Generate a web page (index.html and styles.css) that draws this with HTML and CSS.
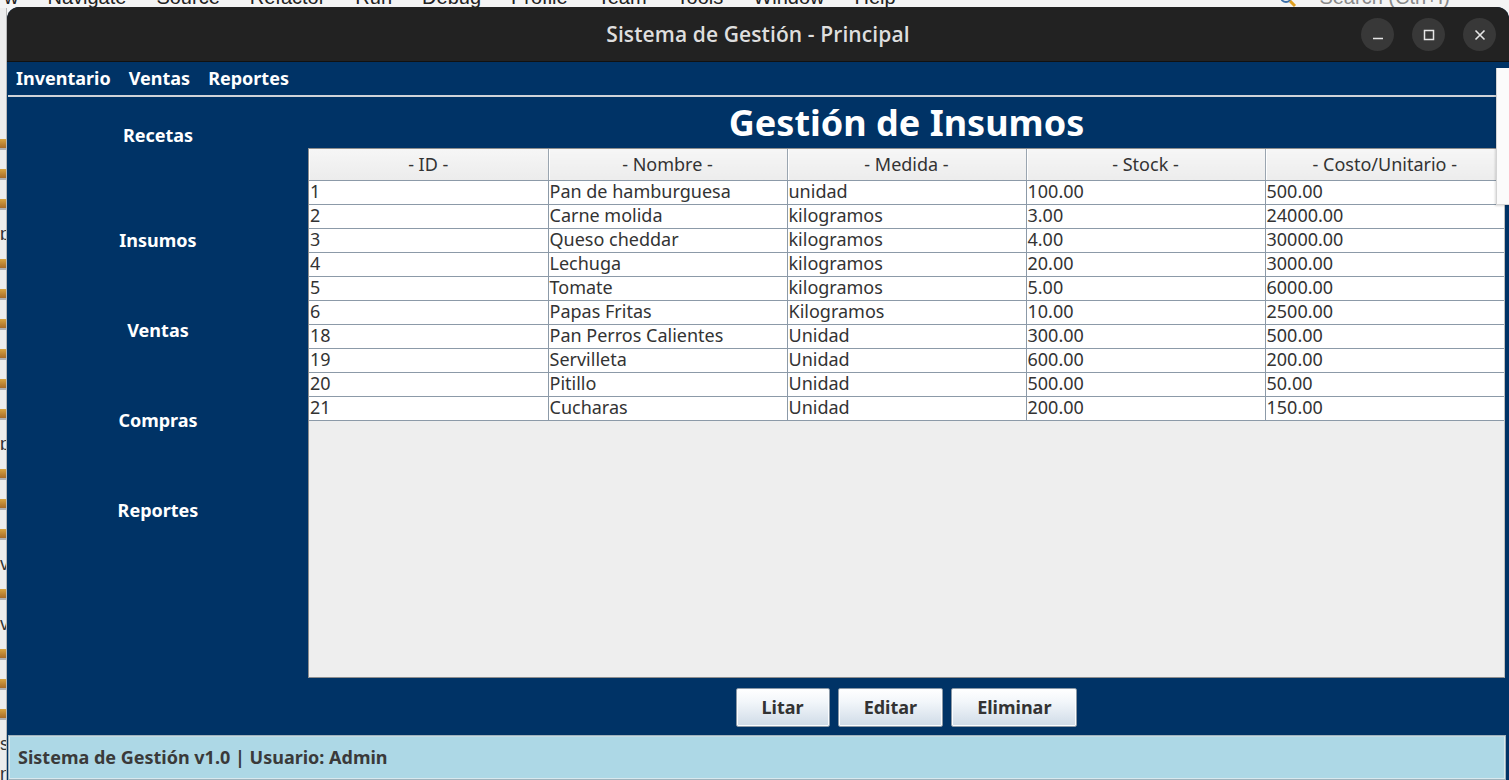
FILE: index.html
```html
<!DOCTYPE html>
<html lang="es">
<head>
<meta charset="utf-8">
<title>Sistema de Gestión - Principal</title>
<link rel="stylesheet" href="styles.css">
</head>
<body>
<div class="ide">
  <div class="ide-menu">
    <span class="m1">w</span><span>Navigate</span><span>Source</span><span>Refactor</span><span>Run</span><span>Debug</span><span>Profile</span><span>Team</span><span>Tools</span><span>Window</span><span>Help</span>
    <span class="ide-search"><svg width="18" height="18" viewBox="0 0 18 18"><circle cx="7" cy="7" r="5" fill="none" stroke="#3b6ea8" stroke-width="2"/><path d="M11 11l5 5" stroke="#e0a020" stroke-width="3"/></svg>Search (Ctrl+I)</span>
  </div>
  <div class="ide-left">
    <i></i><i></i><i></i><b>p</b><i></i><i></i><i></i><i></i><i></i><i></i><b>p</b><i></i><i></i><i></i><b>v</b><i></i><b>v</b><i></i><i></i><i></i><b>s</b><b>n</b>
  </div>
</div>

<div class="window">
  <div class="titlebar">
    <span class="title">Sistema de Gestión - Principal</span>
    <div class="controls">
      <span class="ctl"><svg width="14" height="14" viewBox="0 0 14 14"><path d="M2 10.5h10" stroke="#e6e6e6" stroke-width="1.6"/></svg></span>
      <span class="ctl"><svg width="14" height="14" viewBox="0 0 14 14"><rect x="2.5" y="2.5" width="9" height="9" fill="none" stroke="#e6e6e6" stroke-width="1.5"/></svg></span>
      <span class="ctl"><svg width="14" height="14" viewBox="0 0 14 14"><path d="M2.5 2.5l9 9M11.5 2.5l-9 9" stroke="#e6e6e6" stroke-width="1.6"/></svg></span>
    </div>
  </div>

  <nav class="menubar">
    <span>Inventario</span><span>Ventas</span><span>Reportes</span>
  </nav>

  <div class="main">
    <aside class="sidebar">
      <span class="nav-item first">Recetas</span>
      <span class="nav-item">Insumos</span>
      <span class="nav-item">Ventas</span>
      <span class="nav-item">Compras</span>
      <span class="nav-item">Reportes</span>
    </aside>
    <section class="content">
      <h1 class="page-title">Gestión de Insumos</h1>
      <div class="table-wrap">
        <table class="grid">
          <thead>
            <tr><th>- ID -</th><th>- Nombre -</th><th>- Medida -</th><th>- Stock -</th><th>- Costo/Unitario -</th></tr>
          </thead>
          <tbody>
            <tr><td>1</td><td>Pan de hamburguesa</td><td>unidad</td><td>100.00</td><td>500.00</td></tr>
            <tr><td>2</td><td>Carne molida</td><td>kilogramos</td><td>3.00</td><td>24000.00</td></tr>
            <tr><td>3</td><td>Queso cheddar</td><td>kilogramos</td><td>4.00</td><td>30000.00</td></tr>
            <tr><td>4</td><td>Lechuga</td><td>kilogramos</td><td>20.00</td><td>3000.00</td></tr>
            <tr><td>5</td><td>Tomate</td><td>kilogramos</td><td>5.00</td><td>6000.00</td></tr>
            <tr><td>6</td><td>Papas Fritas</td><td>Kilogramos</td><td>10.00</td><td>2500.00</td></tr>
            <tr><td>18</td><td>Pan Perros Calientes</td><td>Unidad</td><td>300.00</td><td>500.00</td></tr>
            <tr><td>19</td><td>Servilleta</td><td>Unidad</td><td>600.00</td><td>200.00</td></tr>
            <tr><td>20</td><td>Pitillo</td><td>Unidad</td><td>500.00</td><td>50.00</td></tr>
            <tr><td>21</td><td>Cucharas</td><td>Unidad</td><td>200.00</td><td>150.00</td></tr>
          </tbody>
        </table>
      </div>
      <div class="actions">
        <button class="btn">Litar</button>
        <button class="btn">Editar</button>
        <button class="btn">Eliminar</button>
      </div>
    </section>
  </div>

  <footer class="status">Sistema de Gestión v1.0 | Usuario: Admin</footer>
</div>

<div class="popup"></div>
</body>
</html>
```

FILE: styles.css
```css
* { box-sizing: border-box; }

html, body {
  margin: 0;
  padding: 0;
  width: 1509px;
  height: 780px;
  overflow: hidden;
}

body {
  background: #f4f4f4;
  font-family: "Noto Sans", "Open Sans", sans-serif;
  position: relative;
}

/* ---------- background IDE ---------- */
.ide-menu {
  display: flex;
  height: 22px;
  margin-top: -14px;
  font-family: "Liberation Sans", Arial, sans-serif;
  font-size: 20px;
  line-height: 22px;
  color: #222;
  white-space: nowrap;
}
.ide-menu span { margin-right: 30px; }
.ide-menu .m1 { margin-left: 4px; margin-right: 29px; }
.ide-search {
  margin-left: auto;
  margin-right: 59px !important;
  color: #888;
  display: flex;
  align-items: flex-end;
  gap: 22px;
}

.ide-left {
  width: 7px;
  display: flex;
  flex-direction: column;
  gap: 19px;
  padding-top: 131px;
  background: #ededed;
  border-right: 1px solid #b8b8b8;
  height: 800px;
}
.ide-left i {
  display: block;
  width: 6px;
  height: 11px;
  background: linear-gradient(#d9a441, #a86c2a);
  border-bottom: 2px solid #b0b0b0;
}
.ide-left b {
  display: block;
  height: 11px;
  font: 18px/11px "Liberation Sans", sans-serif;
  color: #333;
  overflow: hidden;
}

/* ---------- window ---------- */
.window {
  position: absolute;
  left: 7px;
  top: 7px;
  width: 1502px;
  height: 773px;
  display: flex;
  flex-direction: column;
  background: #003366;
  border-radius: 12px 12px 0 0;
  overflow: hidden;
}

.titlebar {
  height: 55px;
  flex: none;
  background: #222222;
  border-bottom: 1px solid #111;
  display: flex;
  align-items: center;
  justify-content: center;
  position: relative;
}
.title {
  color: #dedede;
  font-family: "Open Sans", "Noto Sans", sans-serif;
  font-size: 21px;
  font-weight: 600;
  letter-spacing: 0.1px;
}
.controls {
  position: absolute;
  right: 13px;
  top: 11px;
  display: flex;
  gap: 18px;
}
.ctl {
  width: 33px;
  height: 33px;
  border-radius: 50%;
  background: #383838;
  display: flex;
  align-items: center;
  justify-content: center;
}

.menubar {
  height: 35px;
  flex: none;
  display: flex;
  align-items: center;
  gap: 18px;
  padding: 0 0 2px 8px;
  border-bottom: 2px solid #cfd3d8;
  margin-left: 1px;
  color: #fff;
  font-weight: 700;
  font-size: 18px;
}

.main {
  flex: 1;
  display: flex;
  margin-left: 1px;
}

.sidebar {
  width: 300px;
  flex: none;
  display: flex;
  flex-direction: column;
  align-items: center;
  padding-top: 26px;
}
.nav-item {
  color: #fff;
  font-weight: 700;
  font-size: 18px;
  line-height: 24px;
  margin-top: 66px;
}
.nav-item.first { margin-top: 0; margin-bottom: 15px; }

.content {
  flex: 1;
  display: flex;
  flex-direction: column;
  padding-right: 4px;
}

.page-title {
  margin: 6px 0 5px;
  text-align: center;
  color: #fff;
  font-size: 36px;
  line-height: 40px;
  font-weight: 700;
}

.table-wrap {
  height: 530px;
  flex: none;
  background: #eeeeee;
  border: 1px solid #8e8e8e;
  border-right-color: #c0c0c0;
}

.grid {
  width: 100%;
  table-layout: fixed;
  border-collapse: collapse;
  font-size: 18px;
  color: #333;
}
.grid th {
  height: 31px;
  padding: 0;
  font-weight: 400;
  text-align: center;
  background: linear-gradient(#f6f6f6, #ececec);
  border-right: 1px solid #9aa5b0;
  border-bottom: 1px solid #8c9aa8;
  box-shadow: inset 1px 0 0 #ffffff;
  line-height: 28px;
}
.grid td {
  height: 24px;
  padding: 0 1px;
  vertical-align: top;
  background: #fff;
  border: 1px solid #8c9aa8;
  border-top: none;
  line-height: 20px;
  white-space: nowrap;
  overflow: hidden;
}
.grid td:first-child { border-left: none; }
.grid tr > :last-child { border-right: none; }

.actions {
  display: flex;
  justify-content: center;
  gap: 8px;
  padding-top: 10px;
}
.btn {
  height: 39px;
  padding: 0 25px 1px;
  font-family: "Noto Sans", sans-serif;
  font-size: 18px;
  font-weight: 700;
  color: #333;
  background: linear-gradient(#ffffff, #f2f6fa 35%, #cfdbe7);
  border: 1px solid #8a98a6;
  border-radius: 2px;
  box-shadow: inset 0 0 0 1px #fbfdff;
}

.status {
  height: 43px;
  flex: none;
  margin: 1px 4px 1px 2px;
  background: #add8e6;
  border: 1px solid #d8e8ee;
  border-top-color: #c3dbe4;
  box-shadow: 0 0 0 1px #9fb3bc;
  display: flex;
  align-items: center;
  padding: 0 0 1px 8px;
  color: #3a3a3a;
  font-weight: 700;
  font-size: 18px;
}

/* overlay from another app on the right edge */
.popup {
  position: absolute;
  left: 1496px;
  top: 68px;
  width: 13px;
  height: 137px;
  background: #fbfbfb;
  border-left: 1px solid #d4d4d4;
  border-bottom: 1px solid #d4d4d4;
  box-shadow: -1px 1px 2px rgba(0,0,0,0.15);
}
```
